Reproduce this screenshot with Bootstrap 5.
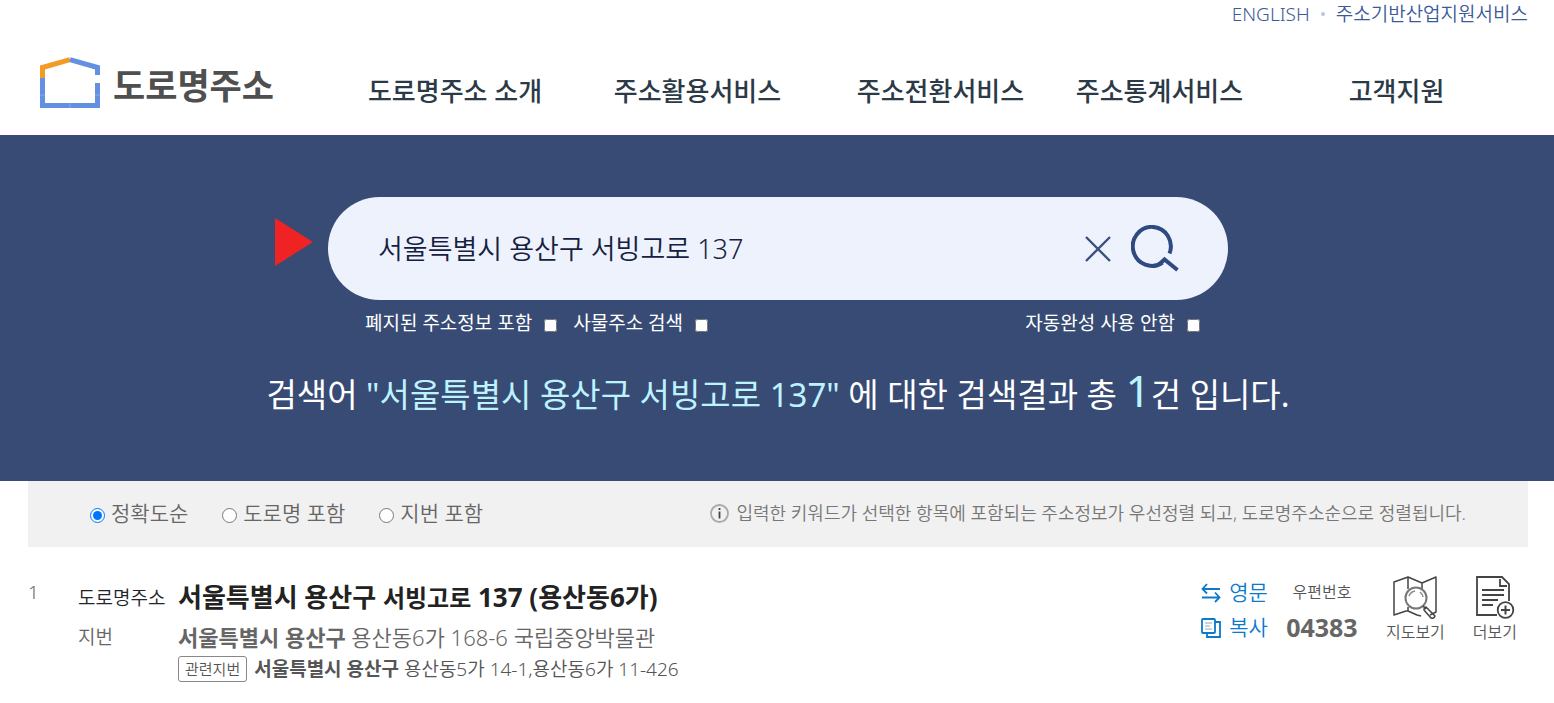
<!DOCTYPE html>
<html lang="ko">
<head>
<meta charset="utf-8">
<meta name="viewport" content="width=device-width, initial-scale=1">
<title>도로명주소</title>
<link href="https://cdn.jsdelivr.net/npm/bootstrap@5.3.0/dist/css/bootstrap.min.css" rel="stylesheet">
<style>
body{font-family:"Noto Sans","Noto Sans CJK KR",sans-serif;font-weight:350;color:#666;background:#fff}
a{text-decoration:none;color:inherit}
svg{display:block;flex:none}
.util-bar{height:28px;padding-right:26px;gap:11px;color:#3c5a99;font-size:19px;line-height:28px}
.util-dot{width:4px;height:4px;border-radius:50%;background:#b5c7e8}
.site-head{height:107px;padding:2px 18px 0 40px}
.brand-link{width:294px;gap:13px;padding-bottom:18px;color:#4f4f4f;font-size:35px;line-height:52px;font-weight:700}
.brand-link span{padding-top:6px}
.main-menu{padding-top:16px;display:grid;grid-template-columns:242fr 243fr 243fr 195fr 279fr;color:#2c3a47;font-size:26px;line-height:36px;font-weight:500;text-align:center}
.hero{background:#374b75;padding:62px 26px 56px 28px;color:#fff}
.search-wrap{max-width:900px}
.search-pill{height:103px;border-radius:52px;background:#edf2fd;padding:0 49px 0 50px}
.search-pill input{border:0;outline:0;background:transparent;color:#16213f;font-size:27px;line-height:40px;font-weight:350;padding:0}
.search-pill button{border:0;background:none;padding:0}
.pointer-mark{position:absolute;top:21px;right:100%;margin-right:15px}
.search-opts{font-size:19px;line-height:28px;padding:9px 28px 0 37px;gap:16px;font-weight:400}
.search-opts label,.sort-bar label{display:flex;align-items:center}
.search-opts label{gap:12px}
.search-opts input,.sort-bar input{margin:4px 0 0}
.count-line{font-size:33px;line-height:60px;margin:28px 0 0;font-weight:400}
.count-line em{font-style:normal;color:#bdf3ff}
.count-line .total{font-size:44px;line-height:1}
.page-main{padding:0 26px 0 28px}
.sort-bar{background:#f1f1f1;min-height:66px;padding:0 62px 2px;font-size:21px;line-height:30px}
.sort-bar input{width:15px;height:15px;margin-right:6px}
.sort-opts{gap:34px}
.sort-note{font-size:18px;line-height:28px;gap:7px;color:#777}
.result-item{padding-top:28px}
.col-no{width:50px;font-size:19px;line-height:34px}
.addr-list{display:grid;grid-template-columns:100px 1fr;margin:0;align-items:center}
.addr-list dt{font-weight:350;font-size:19px;line-height:30px}
.addr-list dd{margin:0}
.addr-road{font-size:26px;line-height:44px;font-weight:700;color:#222}
.addr-road span{font-size:24px}
.addr-lot{font-size:22px;line-height:34px}
.addr-rel{font-size:19px;line-height:30px;color:#555;gap:7px}
.addr-list b{font-weight:700}
.rel-tag{border:1px solid #888;border-radius:3px;font-size:15px;line-height:24px;padding:0 6px}
.acts{padding-right:11px;color:#555}
.act-text{color:#0c7acb;font-size:21px;line-height:35px;border:0;background:none;padding:0;gap:8px;font-weight:350}
.zip-box{width:72px;margin:0 28px 0 18px;font-size:16px;line-height:34px}
.zip-box strong{display:block;font-size:25px;line-height:36px;color:#666;font-weight:700}
.act-icon{border:0;background:none;padding:0;font-size:16px;line-height:26px;color:#555;font-weight:350}
</style>
</head>
<body>
<div class="util-bar d-flex justify-content-end align-items-center">
  <a href="#">ENGLISH</a><span class="util-dot"></span><a href="#">주소기반산업지원서비스</a>
</div>
<header class="site-head d-flex align-items-center">
  <a href="#" class="brand-link d-flex align-items-center flex-shrink-0 pb-0">
    <svg width="60" height="52" viewBox="0 0 60 52" fill="none" stroke-width="5">
      <path d="M2.500 21V10.500L30 2.700" stroke="#f39b27"/>
      <path d="M30 2.700L57.500 10.500V18M57.500 26V48.500H2.500V21" stroke="#6490e2"/>
      <path d="M30 46v5M0 38h5M55 38h5" stroke="#86a9ea" stroke-width="1"/>
    </svg>
    <span>도로명주소</span>
  </a>
  <nav class="main-menu flex-grow-1">
    <a href="#">도로명주소 소개</a><a href="#">주소활용서비스</a><a href="#">주소전환서비스</a><a href="#">주소통계서비스</a><a href="#">고객지원</a>
  </nav>
</header>
<section class="hero">
  <div class="search-wrap mx-auto position-relative">
    <svg class="pointer-mark" width="38" height="48" viewBox="0 0 38 48"><path d="M0 0L38 24L0 48z" fill="#ef2323"/></svg>
    <form class="search-pill d-flex align-items-center">
      <input class="flex-grow-1" type="text" aria-label="주소 검색어" value="서울특별시 용산구 서빙고로 137">
      <button type="button" aria-label="지우기">
        <svg width="26" height="26" viewBox="0 0 26 26" stroke="#3b507f" stroke-width="2.400"><path d="M1 1L25 25M25 1L1 25"/></svg>
      </button>
      <button type="button" aria-label="검색" class="ms-3 ps-1">
        <svg width="48" height="47" viewBox="0 0 48 47" fill="none" stroke="#2f4a80" stroke-width="4"><path d="M38.500 28.500A19 19.500 0 1 0 31.500 37.500"/><path d="M46.500 45L33.500 34.500L28 39.500" stroke-linejoin="miter"/></svg>
      </button>
    </form>
    <div class="search-opts d-flex">
      <label>폐지된 주소정보 포함 <input type="checkbox"></label>
      <label>사물주소 검색 <input type="checkbox"></label>
      <label class="ms-auto">자동완성 사용 안함 <input type="checkbox"></label>
    </div>
  </div>
  <p class="count-line text-center">검색어 <em>"서울특별시 용산구 서빙고로 137"</em> 에 대한 검색결과 총 <em class="total">1</em>건 입니다.</p>
</section>
<main class="page-main">
  <div class="sort-bar d-flex align-items-center justify-content-between">
    <div class="sort-opts d-flex">
      <label><input type="radio" name="sort" checked>정확도순</label>
      <label><input type="radio" name="sort">도로명 포함</label>
      <label><input type="radio" name="sort">지번 포함</label>
    </div>
    <div class="sort-note d-flex align-items-center">
      <svg width="19" height="19" viewBox="0 0 19 19" fill="none"><circle cx="9.500" cy="9.500" r="8.500" stroke="#aaa" stroke-width="1.800"/><path d="M9.500 7.500v7M9.500 4v2" stroke="#444" stroke-width="1.800"/></svg>
      <span>입력한 키워드가 선택한 항목에 포함되는 주소정보가 우선정렬 되고, 도로명주소순으로 정렬됩니다.</span>
    </div>
  </div>
  <article class="result-item d-flex align-items-start">
    <div class="col-no flex-shrink-0">1</div>
    <dl class="addr-list flex-grow-1">
      <dt class="text-dark">도로명주소</dt>
      <dd class="addr-road">서울특별시 용산구 <span>서빙고로</span> 137 (용산동6가)</dd>
      <dt>지번</dt>
      <dd class="addr-lot"><b>서울특별시 용산구</b> 용산동6가 168-6 국립중앙박물관</dd>
      <dd></dd>
      <dd class="addr-rel d-flex align-items-center"><span class="rel-tag">관련지번</span><span><b>서울특별시 용산구</b> 용산동5가 14-1,용산동6가 11-426</span></dd>
    </dl>
    <div class="acts d-flex align-items-start flex-shrink-0">
      <div>
        <button type="button" class="act-text d-flex align-items-center">
          <svg width="20" height="20" viewBox="0 0 20 20" fill="none" stroke="#0c7acb" stroke-width="1.800"><path d="M6 1L1.500 6L6 10.500M1.500 6H19M14 9.500L18.500 14.500L14 19M18.500 14.500H1"/></svg>영문
        </button>
        <button type="button" class="act-text d-flex align-items-center">
          <svg width="20" height="20" viewBox="0 0 20 20" fill="none" stroke="#0c7acb" stroke-width="1.800"><rect x="1" y="1" width="13" height="14" rx="1"/><path d="M14 4h5v15H6v-4"/><path d="M4 5h7M4 8h5M4 11h7" stroke="#8ba9bd" stroke-width="1.200"/></svg>복사
        </button>
      </div>
      <div class="zip-box text-center">우편번호<strong>04383</strong></div>
      <button type="button" class="act-icon d-flex flex-column align-items-center me-4">
        <svg width="44" height="44" viewBox="0 0 44 44" fill="none" stroke="#444" stroke-width="1.500" stroke-linejoin="round"><path d="M13 36L1 40V7L15 2L29 8L43 2V37L37 40M15 2V14M15 32V36L24 40L28 41M29 8V14M13 36H15"/><circle cx="23" cy="23" r="10.500" stroke="#777" stroke-width="2"/><path d="M16 21a8 8 0 0 1 6-5M27 17a8 8 0 0 1 3 5" stroke="#888"/><path d="M30 31L33 34M33 32L42 41Q41 44 38 43L31 35Q31 32 33 32z"/></svg>
        지도보기
      </button>
      <button type="button" class="act-icon d-flex flex-column align-items-center ms-1">
        <svg width="40" height="44" viewBox="0 0 40 44" fill="none" stroke="#444" stroke-width="1.800"><path d="M22 40H2V2H27L34 9V26M25 4V11H32"/><path d="M7 15H29M7 20H29M7 25H23M7 30H18" stroke-width="2"/><circle cx="30.500" cy="35" r="7.800" fill="#fff"/><path d="M26 35h9M30.500 30.500v9" stroke-width="2"/></svg>
        더보기
      </button>
    </div>
  </article>
</main>
<script src="https://cdn.jsdelivr.net/npm/bootstrap@5.3.0/dist/js/bootstrap.bundle.min.js"></script>
</body>
</html>
